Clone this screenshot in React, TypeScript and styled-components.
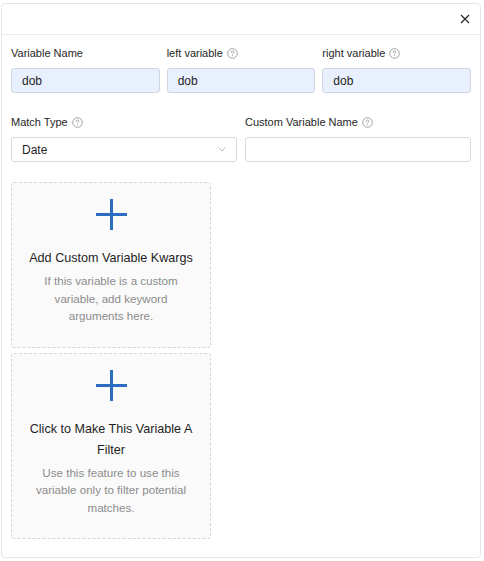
import React from "react";
import styled, { createGlobalStyle } from "styled-components";

const Global = createGlobalStyle`
  html, body { margin: 0; padding: 0; background: #ffffff; }
  body { font-family: "Liberation Sans", Arial, sans-serif; color: #262626; }
  * { box-sizing: border-box; }
`;

const Page = styled.div`
  padding: 3px 3px 0 1px;
`;

const Panel = styled.div`
  width: 480px;
  height: 555px;
  border: 1px solid #e6e6e6;
  border-radius: 4px;
  display: flex;
  flex-direction: column;
  background: #fff;
`;

const Header = styled.div`
  height: 31px;
  border-bottom: 1px solid #ebebeb;
  display: flex;
  align-items: center;
  justify-content: flex-end;
  padding-right: 10px;
`;

const CloseBtn = styled.button`
  border: none;
  background: none;
  padding: 0;
  width: 11px;
  height: 11px;
  display: flex;
  align-items: center;
  justify-content: center;
  cursor: pointer;
`;

const Body = styled.div`
  padding: 10px 9px 10px 9px;
  display: flex;
  flex-direction: column;
`;

const Row = styled.div<{ $cols: number; $gap: number; $mb: number }>`
  display: grid;
  grid-template-columns: repeat(${(p) => p.$cols}, 1fr);
  column-gap: ${(p) => p.$gap}px;
  margin-bottom: ${(p) => p.$mb}px;
`;

const Field = styled.div`
  display: flex;
  flex-direction: column;
  gap: 7px;
`;

const Label = styled.label`
  display: flex;
  align-items: center;
  gap: 4px;
  height: 16px;
  font-size: 11px;
  color: #262626;
  line-height: 16px;
`;

const Input = styled.div<{ $filled?: boolean }>`
  height: 25px;
  border: 1px solid ${(p) => (p.$filled ? "#cfd6e0" : "#d9d9d9")};
  border-radius: 3px;
  background: ${(p) => (p.$filled ? "#e8f0fe" : "#ffffff")};
  padding: 0 10px;
  font-size: 12px;
  color: #1f1f1f;
  display: flex;
  align-items: center;
  justify-content: space-between;
`;

const Cards = styled.div`
  display: flex;
  flex-direction: column;
  gap: 5px;
  width: 200px;
`;

const DropCard = styled.div`
  border: 1px dashed #d6d6d6;
  border-radius: 3px;
  background: #fafafa;
  display: flex;
  flex-direction: column;
  align-items: center;
  padding: 16px 14px 22px;
  text-align: center;
`;

const PlusWrap = styled.div`
  width: 31px;
  height: 31px;
  margin-bottom: 18px;
`;

const CardTitle = styled.div`
  font-size: 12.6px;
  line-height: 21px;
  color: #1f1f1f;
  margin-bottom: 3px;
`;

const CardDesc = styled.div`
  font-size: 11.6px;
  line-height: 17.5px;
  color: #8c8c8c;
  padding: 0 6px;
`;

const Help = () => (
  <svg width="11" height="11" viewBox="0 0 11 11" fill="none">
    <circle cx="5.5" cy="5.5" r="4.8" stroke="#8c8c8c" strokeWidth="0.8" />
    <path
      d="M4.1 4.3c0-.8.6-1.3 1.4-1.3s1.4.5 1.4 1.2c0 .9-1.3 1-1.3 1.9"
      stroke="#8c8c8c"
      strokeWidth="0.8"
      strokeLinecap="round"
    />
    <circle cx="5.6" cy="7.8" r="0.5" fill="#8c8c8c" />
  </svg>
);

const Plus = () => (
  <svg width="31" height="31" viewBox="0 0 31 31">
    <rect x="14" y="0" width="3" height="31" fill="#2a6cc0" />
    <rect x="0" y="14" width="31" height="3" fill="#2a6cc0" />
  </svg>
);

const Chevron = () => (
  <svg width="8" height="5" viewBox="0 0 8 5" fill="none">
    <path d="M0.5 0.5L4 4L7.5 0.5" stroke="#b5b5b5" strokeWidth="0.9" />
  </svg>
);

export default function App() {
  return (
    <>
      <Global />
      <Page>
        <Panel>
          <Header>
            <CloseBtn aria-label="close">
              <svg width="10" height="10" viewBox="0 0 10 10">
                <path d="M1 1L9 9M9 1L1 9" stroke="#262626" strokeWidth="1.2" />
              </svg>
            </CloseBtn>
          </Header>
          <Body>
            <Row $cols={3} $gap={7} $mb={21}>
              <Field>
                <Label>Variable Name</Label>
                <Input $filled>dob</Input>
              </Field>
              <Field>
                <Label>
                  left variable <Help />
                </Label>
                <Input $filled>dob</Input>
              </Field>
              <Field>
                <Label>
                  right variable <Help />
                </Label>
                <Input $filled>dob</Input>
              </Field>
            </Row>
            <Row $cols={2} $gap={8} $mb={20}>
              <Field>
                <Label>
                  Match Type <Help />
                </Label>
                <Input>
                  <span>Date</span>
                  <Chevron />
                </Input>
              </Field>
              <Field>
                <Label>
                  Custom Variable Name <Help />
                </Label>
                <Input />
              </Field>
            </Row>
            <Cards>
              <DropCard>
                <PlusWrap>
                  <Plus />
                </PlusWrap>
                <CardTitle>Add Custom Variable Kwargs</CardTitle>
                <CardDesc>If this variable is a custom variable, add keyword arguments here.</CardDesc>
              </DropCard>
              <DropCard>
                <PlusWrap>
                  <Plus />
                </PlusWrap>
                <CardTitle>Click to Make This Variable A Filter</CardTitle>
                <CardDesc>Use this feature to use this variable only to filter potential matches.</CardDesc>
              </DropCard>
            </Cards>
          </Body>
        </Panel>
      </Page>
    </>
  );
}
